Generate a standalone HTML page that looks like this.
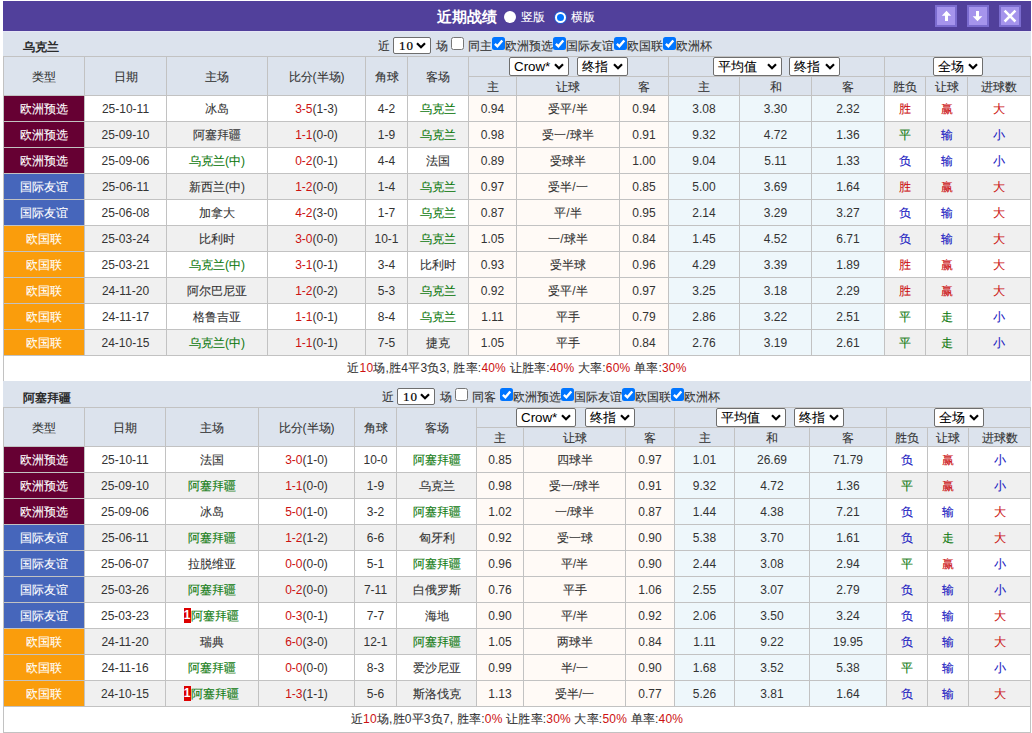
<!DOCTYPE html>
<html><head><meta charset="utf-8"><style>
html,body{margin:0;padding:0;background:#fff;width:1032px;height:733px;overflow:hidden;position:relative}
body{font-family:"Liberation Sans", sans-serif;font-size:12px;color:#333333}
div{position:absolute;box-sizing:content-box}
.c{text-align:center;white-space:nowrap;overflow:hidden}
.t{white-space:nowrap}
i.k{font-style:normal;-webkit-text-stroke:0.1px currentColor}
.nb i.k{-webkit-text-stroke:0}
.sel{background:#fff;border:1px solid #6e6e6e;border-radius:2px}
.sl{position:absolute;left:4px;top:0;font-size:13.33px;line-height:17px;color:#000}
.bd{display:inline-block;background:#dd0000;color:#fff;font-weight:bold;width:7px;height:15px;line-height:15px;vertical-align:middle;text-align:center;font-size:12px;margin-top:-2px}
</style></head><body>
<div style="left:3px;top:1px;width:1028px;height:30px;background:#51409b"></div>
<div class="t nb" style="left:437px;top:1px;height:30px;line-height:32px;font-size:15px;font-weight:bold;color:#fff"><i class="k">近期战绩</i></div>
<div style="left:504px;top:11px;width:12px;height:12px;border-radius:50%;background:#fff"></div>
<div class="t" style="left:521px;top:1px;height:30px;line-height:32px;color:#fff"><i class="k">竖版</i></div>
<div style="left:555px;top:12px;width:7px;height:7px;border-radius:50%;background:#0075ff;border:2px solid #fff;box-shadow:0 0 0 1px #1f5fd6"></div>
<div class="t" style="left:571px;top:1px;height:30px;line-height:32px;color:#fff"><i class="k">横版</i></div>
<div style="left:935px;top:5px;width:18px;height:18px;background:#a594ec;border:2px solid #7b6ccf"><svg width="22" height="22" viewBox="0 0 22 22" style="position:absolute;left:-2px;top:-2px"><path d="M11.5 5.8 L16.2 10.8 L13 10.8 L13 16 L10 16 L10 10.8 L6.8 10.8 Z" fill="#fff"/></svg></div>
<div style="left:967px;top:5px;width:18px;height:18px;background:#a594ec;border:2px solid #7b6ccf"><svg width="22" height="22" viewBox="0 0 22 22" style="position:absolute;left:-2px;top:-2px"><path d="M10.5 16.2 L15.3 11.2 L12 11.2 L12 6 L9 6 L9 11.2 L5.7 11.2 Z" fill="#fff"/></svg></div>
<div style="left:999px;top:5px;width:18px;height:18px;background:#a594ec;border:2px solid #7b6ccf"><svg width="22" height="22" viewBox="0 0 22 22" style="position:absolute;left:-2px;top:-2px"><path d="M5.6 5.7 L16.4 16.5 M16.4 5.7 L5.6 16.5" stroke="#fff" stroke-width="2.5" fill="none"/></svg></div>
<div style="left:3px;top:31px;width:1028px;height:25px;background:#dce3ed"></div>
<div style="left:3px;top:31px;width:1028px;height:1px;background:#e6e6f5"></div>
<div class="t nb" style="left:23px;top:34px;height:25px;line-height:27px;font-weight:bold;color:#2a2a2a"><i class="k">乌克兰</i></div>
<div class="t" style="left:378px;top:33px;height:25px;line-height:27px"><i class="k">近</i></div>
<div class="sel" style="left:393px;top:37px;width:36px;height:15px;border-radius:2px"><span class="sl" style="font-family:'Liberation Serif',serif;font-size:13px;line-height:16px;left:5px;letter-spacing:1px;-webkit-text-stroke:0.2px #000">10</span><svg width="10" height="7" viewBox="0 0 10 7" style="position:absolute;right:4px;top:4px"><path d="M1 1.2 L5 5.2 L9 1.2" fill="none" stroke="#000" stroke-width="2.2"/></svg></div>
<div class="t" style="left:436px;top:33px;height:25px;line-height:27px"><i class="k">场</i></div>
<div style="left:451px;top:37px;width:11px;height:11px;background:#fff;border:1px solid #767676;border-radius:2.5px"></div>
<div class="t" style="left:468px;top:33px;height:25px;line-height:27px"><i class="k">同主</i></div>
<div style="left:492px;top:37px;width:13px;height:13px;background:#0075ff;border-radius:2.5px"><svg width="13" height="13" viewBox="0 0 13 13" style="position:absolute;left:0;top:0"><path d="M2.9 6.9 L5.4 9.3 L10.3 3.4" fill="none" stroke="#fff" stroke-width="2.4" stroke-linecap="butt"/></svg></div>
<div class="t" style="left:505px;top:33px;height:25px;line-height:27px"><i class="k">欧洲预选</i></div>
<div style="left:553px;top:37px;width:13px;height:13px;background:#0075ff;border-radius:2.5px"><svg width="13" height="13" viewBox="0 0 13 13" style="position:absolute;left:0;top:0"><path d="M2.9 6.9 L5.4 9.3 L10.3 3.4" fill="none" stroke="#fff" stroke-width="2.4" stroke-linecap="butt"/></svg></div>
<div class="t" style="left:566px;top:33px;height:25px;line-height:27px"><i class="k">国际友谊</i></div>
<div style="left:614px;top:37px;width:13px;height:13px;background:#0075ff;border-radius:2.5px"><svg width="13" height="13" viewBox="0 0 13 13" style="position:absolute;left:0;top:0"><path d="M2.9 6.9 L5.4 9.3 L10.3 3.4" fill="none" stroke="#fff" stroke-width="2.4" stroke-linecap="butt"/></svg></div>
<div class="t" style="left:627px;top:33px;height:25px;line-height:27px"><i class="k">欧国联</i></div>
<div style="left:663px;top:37px;width:13px;height:13px;background:#0075ff;border-radius:2.5px"><svg width="13" height="13" viewBox="0 0 13 13" style="position:absolute;left:0;top:0"><path d="M2.9 6.9 L5.4 9.3 L10.3 3.4" fill="none" stroke="#fff" stroke-width="2.4" stroke-linecap="butt"/></svg></div>
<div class="t" style="left:676px;top:33px;height:25px;line-height:27px"><i class="k">欧洲杯</i></div>
<div style="left:4px;top:57px;width:1026px;height:38px;background:#dce3ed"></div>
<div style="left:4px;top:96px;width:1026px;height:25px;background:#ffffff"></div>
<div style="left:4px;top:96px;width:80px;height:25px;background:#660033"></div>
<div style="left:469px;top:96px;width:199px;height:25px;background:#fffaf6"></div>
<div style="left:669px;top:96px;width:215px;height:25px;background:#eef7fb"></div>
<div style="left:4px;top:122px;width:1026px;height:25px;background:#f0f0f0"></div>
<div style="left:4px;top:122px;width:80px;height:25px;background:#660033"></div>
<div style="left:469px;top:122px;width:199px;height:25px;background:#fffaf6"></div>
<div style="left:669px;top:122px;width:215px;height:25px;background:#eef7fb"></div>
<div style="left:4px;top:148px;width:1026px;height:25px;background:#ffffff"></div>
<div style="left:4px;top:148px;width:80px;height:25px;background:#660033"></div>
<div style="left:469px;top:148px;width:199px;height:25px;background:#fffaf6"></div>
<div style="left:669px;top:148px;width:215px;height:25px;background:#eef7fb"></div>
<div style="left:4px;top:174px;width:1026px;height:25px;background:#f0f0f0"></div>
<div style="left:4px;top:174px;width:80px;height:25px;background:#4666bb"></div>
<div style="left:469px;top:174px;width:199px;height:25px;background:#fffaf6"></div>
<div style="left:669px;top:174px;width:215px;height:25px;background:#eef7fb"></div>
<div style="left:4px;top:200px;width:1026px;height:25px;background:#ffffff"></div>
<div style="left:4px;top:200px;width:80px;height:25px;background:#4666bb"></div>
<div style="left:469px;top:200px;width:199px;height:25px;background:#fffaf6"></div>
<div style="left:669px;top:200px;width:215px;height:25px;background:#eef7fb"></div>
<div style="left:4px;top:226px;width:1026px;height:25px;background:#f0f0f0"></div>
<div style="left:4px;top:226px;width:80px;height:25px;background:#fa9d0c"></div>
<div style="left:469px;top:226px;width:199px;height:25px;background:#fffaf6"></div>
<div style="left:669px;top:226px;width:215px;height:25px;background:#eef7fb"></div>
<div style="left:4px;top:252px;width:1026px;height:25px;background:#ffffff"></div>
<div style="left:4px;top:252px;width:80px;height:25px;background:#fa9d0c"></div>
<div style="left:469px;top:252px;width:199px;height:25px;background:#fffaf6"></div>
<div style="left:669px;top:252px;width:215px;height:25px;background:#eef7fb"></div>
<div style="left:4px;top:278px;width:1026px;height:25px;background:#f0f0f0"></div>
<div style="left:4px;top:278px;width:80px;height:25px;background:#fa9d0c"></div>
<div style="left:469px;top:278px;width:199px;height:25px;background:#fffaf6"></div>
<div style="left:669px;top:278px;width:215px;height:25px;background:#eef7fb"></div>
<div style="left:4px;top:304px;width:1026px;height:25px;background:#ffffff"></div>
<div style="left:4px;top:304px;width:80px;height:25px;background:#fa9d0c"></div>
<div style="left:469px;top:304px;width:199px;height:25px;background:#fffaf6"></div>
<div style="left:669px;top:304px;width:215px;height:25px;background:#eef7fb"></div>
<div style="left:4px;top:330px;width:1026px;height:25px;background:#f0f0f0"></div>
<div style="left:4px;top:330px;width:80px;height:25px;background:#fa9d0c"></div>
<div style="left:469px;top:330px;width:199px;height:25px;background:#fffaf6"></div>
<div style="left:669px;top:330px;width:215px;height:25px;background:#eef7fb"></div>
<div style="left:3px;top:56px;width:1028px;height:1px;background:#c2c2c2"></div>
<div style="left:468px;top:76px;width:563px;height:1px;background:#c2c2c2"></div>
<div style="left:3px;top:95px;width:1028px;height:1px;background:#c2c2c2"></div>
<div style="left:3px;top:121px;width:1028px;height:1px;background:#c2c2c2"></div>
<div style="left:3px;top:147px;width:1028px;height:1px;background:#c2c2c2"></div>
<div style="left:3px;top:173px;width:1028px;height:1px;background:#c2c2c2"></div>
<div style="left:3px;top:199px;width:1028px;height:1px;background:#c2c2c2"></div>
<div style="left:3px;top:225px;width:1028px;height:1px;background:#c2c2c2"></div>
<div style="left:3px;top:251px;width:1028px;height:1px;background:#c2c2c2"></div>
<div style="left:3px;top:277px;width:1028px;height:1px;background:#c2c2c2"></div>
<div style="left:3px;top:303px;width:1028px;height:1px;background:#c2c2c2"></div>
<div style="left:3px;top:329px;width:1028px;height:1px;background:#c2c2c2"></div>
<div style="left:3px;top:355px;width:1028px;height:1px;background:#c2c2c2"></div>
<div style="left:3px;top:381px;width:1028px;height:1px;background:#c2c2c2"></div>
<div style="left:3px;top:56px;width:1px;height:326px;background:#c2c2c2"></div>
<div style="left:1030px;top:56px;width:1px;height:326px;background:#c2c2c2"></div>
<div style="left:84px;top:56px;width:1px;height:300px;background:#c2c2c2"></div>
<div style="left:166px;top:56px;width:1px;height:300px;background:#c2c2c2"></div>
<div style="left:267px;top:56px;width:1px;height:300px;background:#c2c2c2"></div>
<div style="left:365px;top:56px;width:1px;height:300px;background:#c2c2c2"></div>
<div style="left:407px;top:56px;width:1px;height:300px;background:#c2c2c2"></div>
<div style="left:468px;top:56px;width:1px;height:300px;background:#c2c2c2"></div>
<div style="left:516px;top:76px;width:1px;height:280px;background:#c2c2c2"></div>
<div style="left:619px;top:76px;width:1px;height:280px;background:#c2c2c2"></div>
<div style="left:668px;top:56px;width:1px;height:300px;background:#c2c2c2"></div>
<div style="left:739px;top:76px;width:1px;height:280px;background:#c2c2c2"></div>
<div style="left:811px;top:76px;width:1px;height:280px;background:#c2c2c2"></div>
<div style="left:884px;top:56px;width:1px;height:300px;background:#c2c2c2"></div>
<div style="left:925px;top:76px;width:1px;height:280px;background:#c2c2c2"></div>
<div style="left:967px;top:76px;width:1px;height:280px;background:#c2c2c2"></div>
<div class="c" style="left:4px;top:57px;width:80px;height:38px;line-height:38px;line-height:40px"><i class="k">类型</i></div>
<div class="c" style="left:85px;top:57px;width:81px;height:38px;line-height:38px;line-height:40px"><i class="k">日期</i></div>
<div class="c" style="left:167px;top:57px;width:100px;height:38px;line-height:38px;line-height:40px"><i class="k">主场</i></div>
<div class="c" style="left:268px;top:57px;width:97px;height:38px;line-height:38px;line-height:40px"><i class="k">比分</i>(<i class="k">半场</i>)</div>
<div class="c" style="left:366px;top:57px;width:41px;height:38px;line-height:38px;line-height:40px"><i class="k">角球</i></div>
<div class="c" style="left:408px;top:57px;width:60px;height:38px;line-height:38px;line-height:40px"><i class="k">客场</i></div>
<div class="c" style="left:469px;top:77px;width:47px;height:18px;line-height:18px;line-height:20px"><i class="k">主</i></div>
<div class="c" style="left:517px;top:77px;width:102px;height:18px;line-height:18px;line-height:20px"><i class="k">让球</i></div>
<div class="c" style="left:620px;top:77px;width:48px;height:18px;line-height:18px;line-height:20px"><i class="k">客</i></div>
<div class="c" style="left:669px;top:77px;width:70px;height:18px;line-height:18px;line-height:20px"><i class="k">主</i></div>
<div class="c" style="left:740px;top:77px;width:71px;height:18px;line-height:18px;line-height:20px"><i class="k">和</i></div>
<div class="c" style="left:812px;top:77px;width:72px;height:18px;line-height:18px;line-height:20px"><i class="k">客</i></div>
<div class="c" style="left:885px;top:77px;width:40px;height:18px;line-height:18px;line-height:20px"><i class="k">胜负</i></div>
<div class="c" style="left:926px;top:77px;width:41px;height:18px;line-height:18px;line-height:20px"><i class="k">让球</i></div>
<div class="c" style="left:968px;top:77px;width:62px;height:18px;line-height:18px;line-height:20px"><i class="k">进球数</i></div>
<div class="sel" style="left:509px;top:57px;width:58px;height:17px;"><span class="sl">Crow*</span><svg class="chev" width="10" height="7" viewBox="0 0 10 7" style="position:absolute;right:4px;top:5px"><path d="M1 1.2 L5 5.2 L9 1.2" fill="none" stroke="#000" stroke-width="2.2"/></svg></div>
<div class="sel" style="left:577px;top:57px;width:49px;height:17px;"><span class="sl"><i class="k">终指</i></span><svg class="chev" width="10" height="7" viewBox="0 0 10 7" style="position:absolute;right:4px;top:5px"><path d="M1 1.2 L5 5.2 L9 1.2" fill="none" stroke="#000" stroke-width="2.2"/></svg></div>
<div class="sel" style="left:713px;top:57px;width:67px;height:17px;"><span class="sl"><i class="k">平均值</i></span><svg class="chev" width="10" height="7" viewBox="0 0 10 7" style="position:absolute;right:4px;top:5px"><path d="M1 1.2 L5 5.2 L9 1.2" fill="none" stroke="#000" stroke-width="2.2"/></svg></div>
<div class="sel" style="left:789px;top:57px;width:49px;height:17px;"><span class="sl"><i class="k">终指</i></span><svg class="chev" width="10" height="7" viewBox="0 0 10 7" style="position:absolute;right:4px;top:5px"><path d="M1 1.2 L5 5.2 L9 1.2" fill="none" stroke="#000" stroke-width="2.2"/></svg></div>
<div class="sel" style="left:933px;top:57px;width:48px;height:17px;"><span class="sl"><i class="k">全场</i></span><svg class="chev" width="10" height="7" viewBox="0 0 10 7" style="position:absolute;right:4px;top:5px"><path d="M1 1.2 L5 5.2 L9 1.2" fill="none" stroke="#000" stroke-width="2.2"/></svg></div>
<div class="c" style="left:4px;top:97px;width:80px;height:25px;line-height:25px;color:#fff"><i class="k">欧洲预选</i></div>
<div class="c" style="left:85px;top:97px;width:81px;height:25px;line-height:25px;">25-10-11</div>
<div class="c" style="left:167px;top:97px;width:100px;height:25px;line-height:25px;"><i class="k">冰岛</i></div>
<div class="c" style="left:268px;top:97px;width:97px;height:25px;line-height:25px;"><span style="color:#cc1111">3-5</span>(1-3)</div>
<div class="c" style="left:366px;top:97px;width:41px;height:25px;line-height:25px;">4-2</div>
<div class="c" style="left:408px;top:97px;width:60px;height:25px;line-height:25px;"><span style="color:#0c780c"><i class="k">乌克兰</i></span></div>
<div class="c" style="left:469px;top:97px;width:47px;height:25px;line-height:25px;">0.94</div>
<div class="c" style="left:517px;top:97px;width:102px;height:25px;line-height:25px;"><i class="k">受平</i>/<i class="k">半</i></div>
<div class="c" style="left:620px;top:97px;width:48px;height:25px;line-height:25px;">0.94</div>
<div class="c" style="left:669px;top:97px;width:70px;height:25px;line-height:25px;">3.08</div>
<div class="c" style="left:740px;top:97px;width:71px;height:25px;line-height:25px;">3.30</div>
<div class="c" style="left:812px;top:97px;width:72px;height:25px;line-height:25px;">2.32</div>
<div class="c" style="left:885px;top:97px;width:40px;height:25px;line-height:25px;color:#cc1111"><i class="k">胜</i></div>
<div class="c" style="left:926px;top:97px;width:41px;height:25px;line-height:25px;color:#cc1111"><i class="k">赢</i></div>
<div class="c" style="left:968px;top:97px;width:62px;height:25px;line-height:25px;color:#cc1111"><i class="k">大</i></div>
<div class="c" style="left:4px;top:123px;width:80px;height:25px;line-height:25px;color:#fff"><i class="k">欧洲预选</i></div>
<div class="c" style="left:85px;top:123px;width:81px;height:25px;line-height:25px;">25-09-10</div>
<div class="c" style="left:167px;top:123px;width:100px;height:25px;line-height:25px;"><i class="k">阿塞拜疆</i></div>
<div class="c" style="left:268px;top:123px;width:97px;height:25px;line-height:25px;"><span style="color:#cc1111">1-1</span>(0-0)</div>
<div class="c" style="left:366px;top:123px;width:41px;height:25px;line-height:25px;">1-9</div>
<div class="c" style="left:408px;top:123px;width:60px;height:25px;line-height:25px;"><span style="color:#0c780c"><i class="k">乌克兰</i></span></div>
<div class="c" style="left:469px;top:123px;width:47px;height:25px;line-height:25px;">0.98</div>
<div class="c" style="left:517px;top:123px;width:102px;height:25px;line-height:25px;"><i class="k">受一</i>/<i class="k">球半</i></div>
<div class="c" style="left:620px;top:123px;width:48px;height:25px;line-height:25px;">0.91</div>
<div class="c" style="left:669px;top:123px;width:70px;height:25px;line-height:25px;">9.32</div>
<div class="c" style="left:740px;top:123px;width:71px;height:25px;line-height:25px;">4.72</div>
<div class="c" style="left:812px;top:123px;width:72px;height:25px;line-height:25px;">1.36</div>
<div class="c" style="left:885px;top:123px;width:40px;height:25px;line-height:25px;color:#0c780c"><i class="k">平</i></div>
<div class="c" style="left:926px;top:123px;width:41px;height:25px;line-height:25px;color:#1515c0"><i class="k">输</i></div>
<div class="c" style="left:968px;top:123px;width:62px;height:25px;line-height:25px;color:#1515c0"><i class="k">小</i></div>
<div class="c" style="left:4px;top:149px;width:80px;height:25px;line-height:25px;color:#fff"><i class="k">欧洲预选</i></div>
<div class="c" style="left:85px;top:149px;width:81px;height:25px;line-height:25px;">25-09-06</div>
<div class="c" style="left:167px;top:149px;width:100px;height:25px;line-height:25px;"><span style="color:#0c780c"><i class="k">乌克兰</i>(<i class="k">中</i>)</span></div>
<div class="c" style="left:268px;top:149px;width:97px;height:25px;line-height:25px;"><span style="color:#cc1111">0-2</span>(0-1)</div>
<div class="c" style="left:366px;top:149px;width:41px;height:25px;line-height:25px;">4-4</div>
<div class="c" style="left:408px;top:149px;width:60px;height:25px;line-height:25px;"><i class="k">法国</i></div>
<div class="c" style="left:469px;top:149px;width:47px;height:25px;line-height:25px;">0.89</div>
<div class="c" style="left:517px;top:149px;width:102px;height:25px;line-height:25px;"><i class="k">受球半</i></div>
<div class="c" style="left:620px;top:149px;width:48px;height:25px;line-height:25px;">1.00</div>
<div class="c" style="left:669px;top:149px;width:70px;height:25px;line-height:25px;">9.04</div>
<div class="c" style="left:740px;top:149px;width:71px;height:25px;line-height:25px;">5.11</div>
<div class="c" style="left:812px;top:149px;width:72px;height:25px;line-height:25px;">1.33</div>
<div class="c" style="left:885px;top:149px;width:40px;height:25px;line-height:25px;color:#1515c0"><i class="k">负</i></div>
<div class="c" style="left:926px;top:149px;width:41px;height:25px;line-height:25px;color:#1515c0"><i class="k">输</i></div>
<div class="c" style="left:968px;top:149px;width:62px;height:25px;line-height:25px;color:#1515c0"><i class="k">小</i></div>
<div class="c" style="left:4px;top:175px;width:80px;height:25px;line-height:25px;color:#fff"><i class="k">国际友谊</i></div>
<div class="c" style="left:85px;top:175px;width:81px;height:25px;line-height:25px;">25-06-11</div>
<div class="c" style="left:167px;top:175px;width:100px;height:25px;line-height:25px;"><i class="k">新西兰</i>(<i class="k">中</i>)</div>
<div class="c" style="left:268px;top:175px;width:97px;height:25px;line-height:25px;"><span style="color:#cc1111">1-2</span>(0-0)</div>
<div class="c" style="left:366px;top:175px;width:41px;height:25px;line-height:25px;">1-4</div>
<div class="c" style="left:408px;top:175px;width:60px;height:25px;line-height:25px;"><span style="color:#0c780c"><i class="k">乌克兰</i></span></div>
<div class="c" style="left:469px;top:175px;width:47px;height:25px;line-height:25px;">0.97</div>
<div class="c" style="left:517px;top:175px;width:102px;height:25px;line-height:25px;"><i class="k">受半</i>/<i class="k">一</i></div>
<div class="c" style="left:620px;top:175px;width:48px;height:25px;line-height:25px;">0.85</div>
<div class="c" style="left:669px;top:175px;width:70px;height:25px;line-height:25px;">5.00</div>
<div class="c" style="left:740px;top:175px;width:71px;height:25px;line-height:25px;">3.69</div>
<div class="c" style="left:812px;top:175px;width:72px;height:25px;line-height:25px;">1.64</div>
<div class="c" style="left:885px;top:175px;width:40px;height:25px;line-height:25px;color:#cc1111"><i class="k">胜</i></div>
<div class="c" style="left:926px;top:175px;width:41px;height:25px;line-height:25px;color:#cc1111"><i class="k">赢</i></div>
<div class="c" style="left:968px;top:175px;width:62px;height:25px;line-height:25px;color:#cc1111"><i class="k">大</i></div>
<div class="c" style="left:4px;top:201px;width:80px;height:25px;line-height:25px;color:#fff"><i class="k">国际友谊</i></div>
<div class="c" style="left:85px;top:201px;width:81px;height:25px;line-height:25px;">25-06-08</div>
<div class="c" style="left:167px;top:201px;width:100px;height:25px;line-height:25px;"><i class="k">加拿大</i></div>
<div class="c" style="left:268px;top:201px;width:97px;height:25px;line-height:25px;"><span style="color:#cc1111">4-2</span>(3-0)</div>
<div class="c" style="left:366px;top:201px;width:41px;height:25px;line-height:25px;">1-7</div>
<div class="c" style="left:408px;top:201px;width:60px;height:25px;line-height:25px;"><span style="color:#0c780c"><i class="k">乌克兰</i></span></div>
<div class="c" style="left:469px;top:201px;width:47px;height:25px;line-height:25px;">0.87</div>
<div class="c" style="left:517px;top:201px;width:102px;height:25px;line-height:25px;"><i class="k">平</i>/<i class="k">半</i></div>
<div class="c" style="left:620px;top:201px;width:48px;height:25px;line-height:25px;">0.95</div>
<div class="c" style="left:669px;top:201px;width:70px;height:25px;line-height:25px;">2.14</div>
<div class="c" style="left:740px;top:201px;width:71px;height:25px;line-height:25px;">3.29</div>
<div class="c" style="left:812px;top:201px;width:72px;height:25px;line-height:25px;">3.27</div>
<div class="c" style="left:885px;top:201px;width:40px;height:25px;line-height:25px;color:#1515c0"><i class="k">负</i></div>
<div class="c" style="left:926px;top:201px;width:41px;height:25px;line-height:25px;color:#1515c0"><i class="k">输</i></div>
<div class="c" style="left:968px;top:201px;width:62px;height:25px;line-height:25px;color:#cc1111"><i class="k">大</i></div>
<div class="c" style="left:4px;top:227px;width:80px;height:25px;line-height:25px;color:#fff"><i class="k">欧国联</i></div>
<div class="c" style="left:85px;top:227px;width:81px;height:25px;line-height:25px;">25-03-24</div>
<div class="c" style="left:167px;top:227px;width:100px;height:25px;line-height:25px;"><i class="k">比利时</i></div>
<div class="c" style="left:268px;top:227px;width:97px;height:25px;line-height:25px;"><span style="color:#cc1111">3-0</span>(0-0)</div>
<div class="c" style="left:366px;top:227px;width:41px;height:25px;line-height:25px;">10-1</div>
<div class="c" style="left:408px;top:227px;width:60px;height:25px;line-height:25px;"><span style="color:#0c780c"><i class="k">乌克兰</i></span></div>
<div class="c" style="left:469px;top:227px;width:47px;height:25px;line-height:25px;">1.05</div>
<div class="c" style="left:517px;top:227px;width:102px;height:25px;line-height:25px;"><i class="k">一</i>/<i class="k">球半</i></div>
<div class="c" style="left:620px;top:227px;width:48px;height:25px;line-height:25px;">0.84</div>
<div class="c" style="left:669px;top:227px;width:70px;height:25px;line-height:25px;">1.45</div>
<div class="c" style="left:740px;top:227px;width:71px;height:25px;line-height:25px;">4.52</div>
<div class="c" style="left:812px;top:227px;width:72px;height:25px;line-height:25px;">6.71</div>
<div class="c" style="left:885px;top:227px;width:40px;height:25px;line-height:25px;color:#1515c0"><i class="k">负</i></div>
<div class="c" style="left:926px;top:227px;width:41px;height:25px;line-height:25px;color:#1515c0"><i class="k">输</i></div>
<div class="c" style="left:968px;top:227px;width:62px;height:25px;line-height:25px;color:#cc1111"><i class="k">大</i></div>
<div class="c" style="left:4px;top:253px;width:80px;height:25px;line-height:25px;color:#fff"><i class="k">欧国联</i></div>
<div class="c" style="left:85px;top:253px;width:81px;height:25px;line-height:25px;">25-03-21</div>
<div class="c" style="left:167px;top:253px;width:100px;height:25px;line-height:25px;"><span style="color:#0c780c"><i class="k">乌克兰</i>(<i class="k">中</i>)</span></div>
<div class="c" style="left:268px;top:253px;width:97px;height:25px;line-height:25px;"><span style="color:#cc1111">3-1</span>(0-1)</div>
<div class="c" style="left:366px;top:253px;width:41px;height:25px;line-height:25px;">3-4</div>
<div class="c" style="left:408px;top:253px;width:60px;height:25px;line-height:25px;"><i class="k">比利时</i></div>
<div class="c" style="left:469px;top:253px;width:47px;height:25px;line-height:25px;">0.93</div>
<div class="c" style="left:517px;top:253px;width:102px;height:25px;line-height:25px;"><i class="k">受半球</i></div>
<div class="c" style="left:620px;top:253px;width:48px;height:25px;line-height:25px;">0.96</div>
<div class="c" style="left:669px;top:253px;width:70px;height:25px;line-height:25px;">4.29</div>
<div class="c" style="left:740px;top:253px;width:71px;height:25px;line-height:25px;">3.39</div>
<div class="c" style="left:812px;top:253px;width:72px;height:25px;line-height:25px;">1.89</div>
<div class="c" style="left:885px;top:253px;width:40px;height:25px;line-height:25px;color:#cc1111"><i class="k">胜</i></div>
<div class="c" style="left:926px;top:253px;width:41px;height:25px;line-height:25px;color:#cc1111"><i class="k">赢</i></div>
<div class="c" style="left:968px;top:253px;width:62px;height:25px;line-height:25px;color:#cc1111"><i class="k">大</i></div>
<div class="c" style="left:4px;top:279px;width:80px;height:25px;line-height:25px;color:#fff"><i class="k">欧国联</i></div>
<div class="c" style="left:85px;top:279px;width:81px;height:25px;line-height:25px;">24-11-20</div>
<div class="c" style="left:167px;top:279px;width:100px;height:25px;line-height:25px;"><i class="k">阿尔巴尼亚</i></div>
<div class="c" style="left:268px;top:279px;width:97px;height:25px;line-height:25px;"><span style="color:#cc1111">1-2</span>(0-2)</div>
<div class="c" style="left:366px;top:279px;width:41px;height:25px;line-height:25px;">5-3</div>
<div class="c" style="left:408px;top:279px;width:60px;height:25px;line-height:25px;"><span style="color:#0c780c"><i class="k">乌克兰</i></span></div>
<div class="c" style="left:469px;top:279px;width:47px;height:25px;line-height:25px;">0.92</div>
<div class="c" style="left:517px;top:279px;width:102px;height:25px;line-height:25px;"><i class="k">受平</i>/<i class="k">半</i></div>
<div class="c" style="left:620px;top:279px;width:48px;height:25px;line-height:25px;">0.97</div>
<div class="c" style="left:669px;top:279px;width:70px;height:25px;line-height:25px;">3.25</div>
<div class="c" style="left:740px;top:279px;width:71px;height:25px;line-height:25px;">3.18</div>
<div class="c" style="left:812px;top:279px;width:72px;height:25px;line-height:25px;">2.29</div>
<div class="c" style="left:885px;top:279px;width:40px;height:25px;line-height:25px;color:#cc1111"><i class="k">胜</i></div>
<div class="c" style="left:926px;top:279px;width:41px;height:25px;line-height:25px;color:#cc1111"><i class="k">赢</i></div>
<div class="c" style="left:968px;top:279px;width:62px;height:25px;line-height:25px;color:#cc1111"><i class="k">大</i></div>
<div class="c" style="left:4px;top:305px;width:80px;height:25px;line-height:25px;color:#fff"><i class="k">欧国联</i></div>
<div class="c" style="left:85px;top:305px;width:81px;height:25px;line-height:25px;">24-11-17</div>
<div class="c" style="left:167px;top:305px;width:100px;height:25px;line-height:25px;"><i class="k">格鲁吉亚</i></div>
<div class="c" style="left:268px;top:305px;width:97px;height:25px;line-height:25px;"><span style="color:#cc1111">1-1</span>(0-1)</div>
<div class="c" style="left:366px;top:305px;width:41px;height:25px;line-height:25px;">8-4</div>
<div class="c" style="left:408px;top:305px;width:60px;height:25px;line-height:25px;"><span style="color:#0c780c"><i class="k">乌克兰</i></span></div>
<div class="c" style="left:469px;top:305px;width:47px;height:25px;line-height:25px;">1.11</div>
<div class="c" style="left:517px;top:305px;width:102px;height:25px;line-height:25px;"><i class="k">平手</i></div>
<div class="c" style="left:620px;top:305px;width:48px;height:25px;line-height:25px;">0.79</div>
<div class="c" style="left:669px;top:305px;width:70px;height:25px;line-height:25px;">2.86</div>
<div class="c" style="left:740px;top:305px;width:71px;height:25px;line-height:25px;">3.22</div>
<div class="c" style="left:812px;top:305px;width:72px;height:25px;line-height:25px;">2.51</div>
<div class="c" style="left:885px;top:305px;width:40px;height:25px;line-height:25px;color:#0c780c"><i class="k">平</i></div>
<div class="c" style="left:926px;top:305px;width:41px;height:25px;line-height:25px;color:#0c780c"><i class="k">走</i></div>
<div class="c" style="left:968px;top:305px;width:62px;height:25px;line-height:25px;color:#1515c0"><i class="k">小</i></div>
<div class="c" style="left:4px;top:331px;width:80px;height:25px;line-height:25px;color:#fff"><i class="k">欧国联</i></div>
<div class="c" style="left:85px;top:331px;width:81px;height:25px;line-height:25px;">24-10-15</div>
<div class="c" style="left:167px;top:331px;width:100px;height:25px;line-height:25px;"><span style="color:#0c780c"><i class="k">乌克兰</i>(<i class="k">中</i>)</span></div>
<div class="c" style="left:268px;top:331px;width:97px;height:25px;line-height:25px;"><span style="color:#cc1111">1-1</span>(0-1)</div>
<div class="c" style="left:366px;top:331px;width:41px;height:25px;line-height:25px;">7-5</div>
<div class="c" style="left:408px;top:331px;width:60px;height:25px;line-height:25px;"><i class="k">捷克</i></div>
<div class="c" style="left:469px;top:331px;width:47px;height:25px;line-height:25px;">1.05</div>
<div class="c" style="left:517px;top:331px;width:102px;height:25px;line-height:25px;"><i class="k">平手</i></div>
<div class="c" style="left:620px;top:331px;width:48px;height:25px;line-height:25px;">0.84</div>
<div class="c" style="left:669px;top:331px;width:70px;height:25px;line-height:25px;">2.76</div>
<div class="c" style="left:740px;top:331px;width:71px;height:25px;line-height:25px;">3.19</div>
<div class="c" style="left:812px;top:331px;width:72px;height:25px;line-height:25px;">2.61</div>
<div class="c" style="left:885px;top:331px;width:40px;height:25px;line-height:25px;color:#0c780c"><i class="k">平</i></div>
<div class="c" style="left:926px;top:331px;width:41px;height:25px;line-height:25px;color:#0c780c"><i class="k">走</i></div>
<div class="c" style="left:968px;top:331px;width:62px;height:25px;line-height:25px;color:#1515c0"><i class="k">小</i></div>
<div class="c" style="left:4px;top:356px;width:1026px;height:25px;line-height:25px;letter-spacing:0.2px"><i class="k">近</i><span style="color:#cc1111">10</span><i class="k">场</i>,<i class="k">胜</i>4<i class="k">平</i>3<i class="k">负</i>3, <i class="k">胜率</i>:<span style="color:#cc1111">40%</span> <i class="k">让胜率</i>:<span style="color:#cc1111">40%</span> <i class="k">大率</i>:<span style="color:#cc1111">60%</span> <i class="k">单率</i>:<span style="color:#cc1111">30%</span></div>
<div style="left:3px;top:381px;width:1028px;height:26px;background:#dce3ed"></div>
<div class="t nb" style="left:23px;top:385px;height:25px;line-height:27px;font-weight:bold;color:#2a2a2a"><i class="k">阿塞拜疆</i></div>
<div class="t" style="left:382px;top:384px;height:25px;line-height:27px"><i class="k">近</i></div>
<div class="sel" style="left:397px;top:388px;width:36px;height:15px;border-radius:2px"><span class="sl" style="font-family:'Liberation Serif',serif;font-size:13px;line-height:16px;left:5px;letter-spacing:1px;-webkit-text-stroke:0.2px #000">10</span><svg width="10" height="7" viewBox="0 0 10 7" style="position:absolute;right:4px;top:4px"><path d="M1 1.2 L5 5.2 L9 1.2" fill="none" stroke="#000" stroke-width="2.2"/></svg></div>
<div class="t" style="left:440px;top:384px;height:25px;line-height:27px"><i class="k">场</i></div>
<div style="left:455px;top:388px;width:11px;height:11px;background:#fff;border:1px solid #767676;border-radius:2.5px"></div>
<div class="t" style="left:472px;top:384px;height:25px;line-height:27px"><i class="k">同客</i></div>
<div style="left:500px;top:388px;width:13px;height:13px;background:#0075ff;border-radius:2.5px"><svg width="13" height="13" viewBox="0 0 13 13" style="position:absolute;left:0;top:0"><path d="M2.9 6.9 L5.4 9.3 L10.3 3.4" fill="none" stroke="#fff" stroke-width="2.4" stroke-linecap="butt"/></svg></div>
<div class="t" style="left:513px;top:384px;height:25px;line-height:27px"><i class="k">欧洲预选</i></div>
<div style="left:561px;top:388px;width:13px;height:13px;background:#0075ff;border-radius:2.5px"><svg width="13" height="13" viewBox="0 0 13 13" style="position:absolute;left:0;top:0"><path d="M2.9 6.9 L5.4 9.3 L10.3 3.4" fill="none" stroke="#fff" stroke-width="2.4" stroke-linecap="butt"/></svg></div>
<div class="t" style="left:574px;top:384px;height:25px;line-height:27px"><i class="k">国际友谊</i></div>
<div style="left:622px;top:388px;width:13px;height:13px;background:#0075ff;border-radius:2.5px"><svg width="13" height="13" viewBox="0 0 13 13" style="position:absolute;left:0;top:0"><path d="M2.9 6.9 L5.4 9.3 L10.3 3.4" fill="none" stroke="#fff" stroke-width="2.4" stroke-linecap="butt"/></svg></div>
<div class="t" style="left:635px;top:384px;height:25px;line-height:27px"><i class="k">欧国联</i></div>
<div style="left:671px;top:388px;width:13px;height:13px;background:#0075ff;border-radius:2.5px"><svg width="13" height="13" viewBox="0 0 13 13" style="position:absolute;left:0;top:0"><path d="M2.9 6.9 L5.4 9.3 L10.3 3.4" fill="none" stroke="#fff" stroke-width="2.4" stroke-linecap="butt"/></svg></div>
<div class="t" style="left:684px;top:384px;height:25px;line-height:27px"><i class="k">欧洲杯</i></div>
<div style="left:4px;top:408px;width:1026px;height:38px;background:#dce3ed"></div>
<div style="left:4px;top:447px;width:1026px;height:25px;background:#ffffff"></div>
<div style="left:4px;top:447px;width:80px;height:25px;background:#660033"></div>
<div style="left:477px;top:447px;width:197px;height:25px;background:#fffaf6"></div>
<div style="left:675px;top:447px;width:211px;height:25px;background:#eef7fb"></div>
<div style="left:4px;top:473px;width:1026px;height:25px;background:#f0f0f0"></div>
<div style="left:4px;top:473px;width:80px;height:25px;background:#660033"></div>
<div style="left:477px;top:473px;width:197px;height:25px;background:#fffaf6"></div>
<div style="left:675px;top:473px;width:211px;height:25px;background:#eef7fb"></div>
<div style="left:4px;top:499px;width:1026px;height:25px;background:#ffffff"></div>
<div style="left:4px;top:499px;width:80px;height:25px;background:#660033"></div>
<div style="left:477px;top:499px;width:197px;height:25px;background:#fffaf6"></div>
<div style="left:675px;top:499px;width:211px;height:25px;background:#eef7fb"></div>
<div style="left:4px;top:525px;width:1026px;height:25px;background:#f0f0f0"></div>
<div style="left:4px;top:525px;width:80px;height:25px;background:#4666bb"></div>
<div style="left:477px;top:525px;width:197px;height:25px;background:#fffaf6"></div>
<div style="left:675px;top:525px;width:211px;height:25px;background:#eef7fb"></div>
<div style="left:4px;top:551px;width:1026px;height:25px;background:#ffffff"></div>
<div style="left:4px;top:551px;width:80px;height:25px;background:#4666bb"></div>
<div style="left:477px;top:551px;width:197px;height:25px;background:#fffaf6"></div>
<div style="left:675px;top:551px;width:211px;height:25px;background:#eef7fb"></div>
<div style="left:4px;top:577px;width:1026px;height:25px;background:#f0f0f0"></div>
<div style="left:4px;top:577px;width:80px;height:25px;background:#4666bb"></div>
<div style="left:477px;top:577px;width:197px;height:25px;background:#fffaf6"></div>
<div style="left:675px;top:577px;width:211px;height:25px;background:#eef7fb"></div>
<div style="left:4px;top:603px;width:1026px;height:25px;background:#ffffff"></div>
<div style="left:4px;top:603px;width:80px;height:25px;background:#4666bb"></div>
<div style="left:477px;top:603px;width:197px;height:25px;background:#fffaf6"></div>
<div style="left:675px;top:603px;width:211px;height:25px;background:#eef7fb"></div>
<div style="left:4px;top:629px;width:1026px;height:25px;background:#f0f0f0"></div>
<div style="left:4px;top:629px;width:80px;height:25px;background:#fa9d0c"></div>
<div style="left:477px;top:629px;width:197px;height:25px;background:#fffaf6"></div>
<div style="left:675px;top:629px;width:211px;height:25px;background:#eef7fb"></div>
<div style="left:4px;top:655px;width:1026px;height:25px;background:#ffffff"></div>
<div style="left:4px;top:655px;width:80px;height:25px;background:#fa9d0c"></div>
<div style="left:477px;top:655px;width:197px;height:25px;background:#fffaf6"></div>
<div style="left:675px;top:655px;width:211px;height:25px;background:#eef7fb"></div>
<div style="left:4px;top:681px;width:1026px;height:25px;background:#f0f0f0"></div>
<div style="left:4px;top:681px;width:80px;height:25px;background:#fa9d0c"></div>
<div style="left:477px;top:681px;width:197px;height:25px;background:#fffaf6"></div>
<div style="left:675px;top:681px;width:211px;height:25px;background:#eef7fb"></div>
<div style="left:3px;top:407px;width:1028px;height:1px;background:#c2c2c2"></div>
<div style="left:476px;top:427px;width:555px;height:1px;background:#c2c2c2"></div>
<div style="left:3px;top:446px;width:1028px;height:1px;background:#c2c2c2"></div>
<div style="left:3px;top:472px;width:1028px;height:1px;background:#c2c2c2"></div>
<div style="left:3px;top:498px;width:1028px;height:1px;background:#c2c2c2"></div>
<div style="left:3px;top:524px;width:1028px;height:1px;background:#c2c2c2"></div>
<div style="left:3px;top:550px;width:1028px;height:1px;background:#c2c2c2"></div>
<div style="left:3px;top:576px;width:1028px;height:1px;background:#c2c2c2"></div>
<div style="left:3px;top:602px;width:1028px;height:1px;background:#c2c2c2"></div>
<div style="left:3px;top:628px;width:1028px;height:1px;background:#c2c2c2"></div>
<div style="left:3px;top:654px;width:1028px;height:1px;background:#c2c2c2"></div>
<div style="left:3px;top:680px;width:1028px;height:1px;background:#c2c2c2"></div>
<div style="left:3px;top:706px;width:1028px;height:1px;background:#c2c2c2"></div>
<div style="left:3px;top:732px;width:1028px;height:1px;background:#c2c2c2"></div>
<div style="left:3px;top:407px;width:1px;height:326px;background:#c2c2c2"></div>
<div style="left:1030px;top:407px;width:1px;height:326px;background:#c2c2c2"></div>
<div style="left:84px;top:407px;width:1px;height:300px;background:#c2c2c2"></div>
<div style="left:165px;top:407px;width:1px;height:300px;background:#c2c2c2"></div>
<div style="left:258px;top:407px;width:1px;height:300px;background:#c2c2c2"></div>
<div style="left:354px;top:407px;width:1px;height:300px;background:#c2c2c2"></div>
<div style="left:396px;top:407px;width:1px;height:300px;background:#c2c2c2"></div>
<div style="left:476px;top:407px;width:1px;height:300px;background:#c2c2c2"></div>
<div style="left:523px;top:427px;width:1px;height:280px;background:#c2c2c2"></div>
<div style="left:625px;top:427px;width:1px;height:280px;background:#c2c2c2"></div>
<div style="left:674px;top:407px;width:1px;height:300px;background:#c2c2c2"></div>
<div style="left:734px;top:427px;width:1px;height:280px;background:#c2c2c2"></div>
<div style="left:809px;top:427px;width:1px;height:280px;background:#c2c2c2"></div>
<div style="left:886px;top:407px;width:1px;height:300px;background:#c2c2c2"></div>
<div style="left:927px;top:427px;width:1px;height:280px;background:#c2c2c2"></div>
<div style="left:968px;top:427px;width:1px;height:280px;background:#c2c2c2"></div>
<div class="c" style="left:4px;top:408px;width:80px;height:38px;line-height:38px;line-height:40px"><i class="k">类型</i></div>
<div class="c" style="left:85px;top:408px;width:80px;height:38px;line-height:38px;line-height:40px"><i class="k">日期</i></div>
<div class="c" style="left:166px;top:408px;width:92px;height:38px;line-height:38px;line-height:40px"><i class="k">主场</i></div>
<div class="c" style="left:259px;top:408px;width:95px;height:38px;line-height:38px;line-height:40px"><i class="k">比分</i>(<i class="k">半场</i>)</div>
<div class="c" style="left:355px;top:408px;width:41px;height:38px;line-height:38px;line-height:40px"><i class="k">角球</i></div>
<div class="c" style="left:397px;top:408px;width:79px;height:38px;line-height:38px;line-height:40px"><i class="k">客场</i></div>
<div class="c" style="left:477px;top:428px;width:46px;height:18px;line-height:18px;line-height:20px"><i class="k">主</i></div>
<div class="c" style="left:524px;top:428px;width:101px;height:18px;line-height:18px;line-height:20px"><i class="k">让球</i></div>
<div class="c" style="left:626px;top:428px;width:48px;height:18px;line-height:18px;line-height:20px"><i class="k">客</i></div>
<div class="c" style="left:675px;top:428px;width:59px;height:18px;line-height:18px;line-height:20px"><i class="k">主</i></div>
<div class="c" style="left:735px;top:428px;width:74px;height:18px;line-height:18px;line-height:20px"><i class="k">和</i></div>
<div class="c" style="left:810px;top:428px;width:76px;height:18px;line-height:18px;line-height:20px"><i class="k">客</i></div>
<div class="c" style="left:887px;top:428px;width:40px;height:18px;line-height:18px;line-height:20px"><i class="k">胜负</i></div>
<div class="c" style="left:928px;top:428px;width:40px;height:18px;line-height:18px;line-height:20px"><i class="k">让球</i></div>
<div class="c" style="left:969px;top:428px;width:61px;height:18px;line-height:18px;line-height:20px"><i class="k">进球数</i></div>
<div class="sel" style="left:516px;top:408px;width:58px;height:17px;"><span class="sl">Crow*</span><svg class="chev" width="10" height="7" viewBox="0 0 10 7" style="position:absolute;right:4px;top:5px"><path d="M1 1.2 L5 5.2 L9 1.2" fill="none" stroke="#000" stroke-width="2.2"/></svg></div>
<div class="sel" style="left:585px;top:408px;width:48px;height:17px;"><span class="sl"><i class="k">终指</i></span><svg class="chev" width="10" height="7" viewBox="0 0 10 7" style="position:absolute;right:4px;top:5px"><path d="M1 1.2 L5 5.2 L9 1.2" fill="none" stroke="#000" stroke-width="2.2"/></svg></div>
<div class="sel" style="left:716px;top:408px;width:68px;height:17px;"><span class="sl"><i class="k">平均值</i></span><svg class="chev" width="10" height="7" viewBox="0 0 10 7" style="position:absolute;right:4px;top:5px"><path d="M1 1.2 L5 5.2 L9 1.2" fill="none" stroke="#000" stroke-width="2.2"/></svg></div>
<div class="sel" style="left:794px;top:408px;width:48px;height:17px;"><span class="sl"><i class="k">终指</i></span><svg class="chev" width="10" height="7" viewBox="0 0 10 7" style="position:absolute;right:4px;top:5px"><path d="M1 1.2 L5 5.2 L9 1.2" fill="none" stroke="#000" stroke-width="2.2"/></svg></div>
<div class="sel" style="left:934px;top:408px;width:48px;height:17px;"><span class="sl"><i class="k">全场</i></span><svg class="chev" width="10" height="7" viewBox="0 0 10 7" style="position:absolute;right:4px;top:5px"><path d="M1 1.2 L5 5.2 L9 1.2" fill="none" stroke="#000" stroke-width="2.2"/></svg></div>
<div class="c" style="left:4px;top:448px;width:80px;height:25px;line-height:25px;color:#fff"><i class="k">欧洲预选</i></div>
<div class="c" style="left:85px;top:448px;width:80px;height:25px;line-height:25px;">25-10-11</div>
<div class="c" style="left:166px;top:448px;width:92px;height:25px;line-height:25px;"><i class="k">法国</i></div>
<div class="c" style="left:259px;top:448px;width:95px;height:25px;line-height:25px;"><span style="color:#cc1111">3-0</span>(1-0)</div>
<div class="c" style="left:355px;top:448px;width:41px;height:25px;line-height:25px;">10-0</div>
<div class="c" style="left:397px;top:448px;width:79px;height:25px;line-height:25px;"><span style="color:#0c780c"><i class="k">阿塞拜疆</i></span></div>
<div class="c" style="left:477px;top:448px;width:46px;height:25px;line-height:25px;">0.85</div>
<div class="c" style="left:524px;top:448px;width:101px;height:25px;line-height:25px;"><i class="k">四球半</i></div>
<div class="c" style="left:626px;top:448px;width:48px;height:25px;line-height:25px;">0.97</div>
<div class="c" style="left:675px;top:448px;width:59px;height:25px;line-height:25px;">1.01</div>
<div class="c" style="left:735px;top:448px;width:74px;height:25px;line-height:25px;">26.69</div>
<div class="c" style="left:810px;top:448px;width:76px;height:25px;line-height:25px;">71.79</div>
<div class="c" style="left:887px;top:448px;width:40px;height:25px;line-height:25px;color:#1515c0"><i class="k">负</i></div>
<div class="c" style="left:928px;top:448px;width:40px;height:25px;line-height:25px;color:#cc1111"><i class="k">赢</i></div>
<div class="c" style="left:969px;top:448px;width:61px;height:25px;line-height:25px;color:#1515c0"><i class="k">小</i></div>
<div class="c" style="left:4px;top:474px;width:80px;height:25px;line-height:25px;color:#fff"><i class="k">欧洲预选</i></div>
<div class="c" style="left:85px;top:474px;width:80px;height:25px;line-height:25px;">25-09-10</div>
<div class="c" style="left:166px;top:474px;width:92px;height:25px;line-height:25px;"><span style="color:#0c780c"><i class="k">阿塞拜疆</i></span></div>
<div class="c" style="left:259px;top:474px;width:95px;height:25px;line-height:25px;"><span style="color:#cc1111">1-1</span>(0-0)</div>
<div class="c" style="left:355px;top:474px;width:41px;height:25px;line-height:25px;">1-9</div>
<div class="c" style="left:397px;top:474px;width:79px;height:25px;line-height:25px;"><i class="k">乌克兰</i></div>
<div class="c" style="left:477px;top:474px;width:46px;height:25px;line-height:25px;">0.98</div>
<div class="c" style="left:524px;top:474px;width:101px;height:25px;line-height:25px;"><i class="k">受一</i>/<i class="k">球半</i></div>
<div class="c" style="left:626px;top:474px;width:48px;height:25px;line-height:25px;">0.91</div>
<div class="c" style="left:675px;top:474px;width:59px;height:25px;line-height:25px;">9.32</div>
<div class="c" style="left:735px;top:474px;width:74px;height:25px;line-height:25px;">4.72</div>
<div class="c" style="left:810px;top:474px;width:76px;height:25px;line-height:25px;">1.36</div>
<div class="c" style="left:887px;top:474px;width:40px;height:25px;line-height:25px;color:#0c780c"><i class="k">平</i></div>
<div class="c" style="left:928px;top:474px;width:40px;height:25px;line-height:25px;color:#cc1111"><i class="k">赢</i></div>
<div class="c" style="left:969px;top:474px;width:61px;height:25px;line-height:25px;color:#1515c0"><i class="k">小</i></div>
<div class="c" style="left:4px;top:500px;width:80px;height:25px;line-height:25px;color:#fff"><i class="k">欧洲预选</i></div>
<div class="c" style="left:85px;top:500px;width:80px;height:25px;line-height:25px;">25-09-06</div>
<div class="c" style="left:166px;top:500px;width:92px;height:25px;line-height:25px;"><i class="k">冰岛</i></div>
<div class="c" style="left:259px;top:500px;width:95px;height:25px;line-height:25px;"><span style="color:#cc1111">5-0</span>(1-0)</div>
<div class="c" style="left:355px;top:500px;width:41px;height:25px;line-height:25px;">3-2</div>
<div class="c" style="left:397px;top:500px;width:79px;height:25px;line-height:25px;"><span style="color:#0c780c"><i class="k">阿塞拜疆</i></span></div>
<div class="c" style="left:477px;top:500px;width:46px;height:25px;line-height:25px;">1.02</div>
<div class="c" style="left:524px;top:500px;width:101px;height:25px;line-height:25px;"><i class="k">一</i>/<i class="k">球半</i></div>
<div class="c" style="left:626px;top:500px;width:48px;height:25px;line-height:25px;">0.87</div>
<div class="c" style="left:675px;top:500px;width:59px;height:25px;line-height:25px;">1.44</div>
<div class="c" style="left:735px;top:500px;width:74px;height:25px;line-height:25px;">4.38</div>
<div class="c" style="left:810px;top:500px;width:76px;height:25px;line-height:25px;">7.21</div>
<div class="c" style="left:887px;top:500px;width:40px;height:25px;line-height:25px;color:#1515c0"><i class="k">负</i></div>
<div class="c" style="left:928px;top:500px;width:40px;height:25px;line-height:25px;color:#1515c0"><i class="k">输</i></div>
<div class="c" style="left:969px;top:500px;width:61px;height:25px;line-height:25px;color:#cc1111"><i class="k">大</i></div>
<div class="c" style="left:4px;top:526px;width:80px;height:25px;line-height:25px;color:#fff"><i class="k">国际友谊</i></div>
<div class="c" style="left:85px;top:526px;width:80px;height:25px;line-height:25px;">25-06-11</div>
<div class="c" style="left:166px;top:526px;width:92px;height:25px;line-height:25px;"><span style="color:#0c780c"><i class="k">阿塞拜疆</i></span></div>
<div class="c" style="left:259px;top:526px;width:95px;height:25px;line-height:25px;"><span style="color:#cc1111">1-2</span>(1-2)</div>
<div class="c" style="left:355px;top:526px;width:41px;height:25px;line-height:25px;">6-6</div>
<div class="c" style="left:397px;top:526px;width:79px;height:25px;line-height:25px;"><i class="k">匈牙利</i></div>
<div class="c" style="left:477px;top:526px;width:46px;height:25px;line-height:25px;">0.92</div>
<div class="c" style="left:524px;top:526px;width:101px;height:25px;line-height:25px;"><i class="k">受一球</i></div>
<div class="c" style="left:626px;top:526px;width:48px;height:25px;line-height:25px;">0.90</div>
<div class="c" style="left:675px;top:526px;width:59px;height:25px;line-height:25px;">5.38</div>
<div class="c" style="left:735px;top:526px;width:74px;height:25px;line-height:25px;">3.70</div>
<div class="c" style="left:810px;top:526px;width:76px;height:25px;line-height:25px;">1.61</div>
<div class="c" style="left:887px;top:526px;width:40px;height:25px;line-height:25px;color:#1515c0"><i class="k">负</i></div>
<div class="c" style="left:928px;top:526px;width:40px;height:25px;line-height:25px;color:#0c780c"><i class="k">走</i></div>
<div class="c" style="left:969px;top:526px;width:61px;height:25px;line-height:25px;color:#cc1111"><i class="k">大</i></div>
<div class="c" style="left:4px;top:552px;width:80px;height:25px;line-height:25px;color:#fff"><i class="k">国际友谊</i></div>
<div class="c" style="left:85px;top:552px;width:80px;height:25px;line-height:25px;">25-06-07</div>
<div class="c" style="left:166px;top:552px;width:92px;height:25px;line-height:25px;"><i class="k">拉脱维亚</i></div>
<div class="c" style="left:259px;top:552px;width:95px;height:25px;line-height:25px;"><span style="color:#cc1111">0-0</span>(0-0)</div>
<div class="c" style="left:355px;top:552px;width:41px;height:25px;line-height:25px;">5-1</div>
<div class="c" style="left:397px;top:552px;width:79px;height:25px;line-height:25px;"><span style="color:#0c780c"><i class="k">阿塞拜疆</i></span></div>
<div class="c" style="left:477px;top:552px;width:46px;height:25px;line-height:25px;">0.96</div>
<div class="c" style="left:524px;top:552px;width:101px;height:25px;line-height:25px;"><i class="k">平</i>/<i class="k">半</i></div>
<div class="c" style="left:626px;top:552px;width:48px;height:25px;line-height:25px;">0.90</div>
<div class="c" style="left:675px;top:552px;width:59px;height:25px;line-height:25px;">2.44</div>
<div class="c" style="left:735px;top:552px;width:74px;height:25px;line-height:25px;">3.08</div>
<div class="c" style="left:810px;top:552px;width:76px;height:25px;line-height:25px;">2.94</div>
<div class="c" style="left:887px;top:552px;width:40px;height:25px;line-height:25px;color:#0c780c"><i class="k">平</i></div>
<div class="c" style="left:928px;top:552px;width:40px;height:25px;line-height:25px;color:#cc1111"><i class="k">赢</i></div>
<div class="c" style="left:969px;top:552px;width:61px;height:25px;line-height:25px;color:#1515c0"><i class="k">小</i></div>
<div class="c" style="left:4px;top:578px;width:80px;height:25px;line-height:25px;color:#fff"><i class="k">国际友谊</i></div>
<div class="c" style="left:85px;top:578px;width:80px;height:25px;line-height:25px;">25-03-26</div>
<div class="c" style="left:166px;top:578px;width:92px;height:25px;line-height:25px;"><span style="color:#0c780c"><i class="k">阿塞拜疆</i></span></div>
<div class="c" style="left:259px;top:578px;width:95px;height:25px;line-height:25px;"><span style="color:#cc1111">0-2</span>(0-0)</div>
<div class="c" style="left:355px;top:578px;width:41px;height:25px;line-height:25px;">7-11</div>
<div class="c" style="left:397px;top:578px;width:79px;height:25px;line-height:25px;"><i class="k">白俄罗斯</i></div>
<div class="c" style="left:477px;top:578px;width:46px;height:25px;line-height:25px;">0.76</div>
<div class="c" style="left:524px;top:578px;width:101px;height:25px;line-height:25px;"><i class="k">平手</i></div>
<div class="c" style="left:626px;top:578px;width:48px;height:25px;line-height:25px;">1.06</div>
<div class="c" style="left:675px;top:578px;width:59px;height:25px;line-height:25px;">2.55</div>
<div class="c" style="left:735px;top:578px;width:74px;height:25px;line-height:25px;">3.07</div>
<div class="c" style="left:810px;top:578px;width:76px;height:25px;line-height:25px;">2.79</div>
<div class="c" style="left:887px;top:578px;width:40px;height:25px;line-height:25px;color:#1515c0"><i class="k">负</i></div>
<div class="c" style="left:928px;top:578px;width:40px;height:25px;line-height:25px;color:#1515c0"><i class="k">输</i></div>
<div class="c" style="left:969px;top:578px;width:61px;height:25px;line-height:25px;color:#1515c0"><i class="k">小</i></div>
<div class="c" style="left:4px;top:604px;width:80px;height:25px;line-height:25px;color:#fff"><i class="k">国际友谊</i></div>
<div class="c" style="left:85px;top:604px;width:80px;height:25px;line-height:25px;">25-03-23</div>
<div class="c" style="left:166px;top:604px;width:92px;height:25px;line-height:25px;"><span style="position:relative;left:-1px"><span class="bd">1</span><span style="color:#0c780c"><i class="k">阿塞拜疆</i></span></span></div>
<div class="c" style="left:259px;top:604px;width:95px;height:25px;line-height:25px;"><span style="color:#cc1111">0-3</span>(0-1)</div>
<div class="c" style="left:355px;top:604px;width:41px;height:25px;line-height:25px;">7-7</div>
<div class="c" style="left:397px;top:604px;width:79px;height:25px;line-height:25px;"><i class="k">海地</i></div>
<div class="c" style="left:477px;top:604px;width:46px;height:25px;line-height:25px;">0.90</div>
<div class="c" style="left:524px;top:604px;width:101px;height:25px;line-height:25px;"><i class="k">平</i>/<i class="k">半</i></div>
<div class="c" style="left:626px;top:604px;width:48px;height:25px;line-height:25px;">0.92</div>
<div class="c" style="left:675px;top:604px;width:59px;height:25px;line-height:25px;">2.06</div>
<div class="c" style="left:735px;top:604px;width:74px;height:25px;line-height:25px;">3.50</div>
<div class="c" style="left:810px;top:604px;width:76px;height:25px;line-height:25px;">3.24</div>
<div class="c" style="left:887px;top:604px;width:40px;height:25px;line-height:25px;color:#1515c0"><i class="k">负</i></div>
<div class="c" style="left:928px;top:604px;width:40px;height:25px;line-height:25px;color:#1515c0"><i class="k">输</i></div>
<div class="c" style="left:969px;top:604px;width:61px;height:25px;line-height:25px;color:#cc1111"><i class="k">大</i></div>
<div class="c" style="left:4px;top:630px;width:80px;height:25px;line-height:25px;color:#fff"><i class="k">欧国联</i></div>
<div class="c" style="left:85px;top:630px;width:80px;height:25px;line-height:25px;">24-11-20</div>
<div class="c" style="left:166px;top:630px;width:92px;height:25px;line-height:25px;"><i class="k">瑞典</i></div>
<div class="c" style="left:259px;top:630px;width:95px;height:25px;line-height:25px;"><span style="color:#cc1111">6-0</span>(3-0)</div>
<div class="c" style="left:355px;top:630px;width:41px;height:25px;line-height:25px;">12-1</div>
<div class="c" style="left:397px;top:630px;width:79px;height:25px;line-height:25px;"><span style="color:#0c780c"><i class="k">阿塞拜疆</i></span></div>
<div class="c" style="left:477px;top:630px;width:46px;height:25px;line-height:25px;">1.05</div>
<div class="c" style="left:524px;top:630px;width:101px;height:25px;line-height:25px;"><i class="k">两球半</i></div>
<div class="c" style="left:626px;top:630px;width:48px;height:25px;line-height:25px;">0.84</div>
<div class="c" style="left:675px;top:630px;width:59px;height:25px;line-height:25px;">1.11</div>
<div class="c" style="left:735px;top:630px;width:74px;height:25px;line-height:25px;">9.22</div>
<div class="c" style="left:810px;top:630px;width:76px;height:25px;line-height:25px;">19.95</div>
<div class="c" style="left:887px;top:630px;width:40px;height:25px;line-height:25px;color:#1515c0"><i class="k">负</i></div>
<div class="c" style="left:928px;top:630px;width:40px;height:25px;line-height:25px;color:#1515c0"><i class="k">输</i></div>
<div class="c" style="left:969px;top:630px;width:61px;height:25px;line-height:25px;color:#cc1111"><i class="k">大</i></div>
<div class="c" style="left:4px;top:656px;width:80px;height:25px;line-height:25px;color:#fff"><i class="k">欧国联</i></div>
<div class="c" style="left:85px;top:656px;width:80px;height:25px;line-height:25px;">24-11-16</div>
<div class="c" style="left:166px;top:656px;width:92px;height:25px;line-height:25px;"><span style="color:#0c780c"><i class="k">阿塞拜疆</i></span></div>
<div class="c" style="left:259px;top:656px;width:95px;height:25px;line-height:25px;"><span style="color:#cc1111">0-0</span>(0-0)</div>
<div class="c" style="left:355px;top:656px;width:41px;height:25px;line-height:25px;">8-3</div>
<div class="c" style="left:397px;top:656px;width:79px;height:25px;line-height:25px;"><i class="k">爱沙尼亚</i></div>
<div class="c" style="left:477px;top:656px;width:46px;height:25px;line-height:25px;">0.99</div>
<div class="c" style="left:524px;top:656px;width:101px;height:25px;line-height:25px;"><i class="k">半</i>/<i class="k">一</i></div>
<div class="c" style="left:626px;top:656px;width:48px;height:25px;line-height:25px;">0.90</div>
<div class="c" style="left:675px;top:656px;width:59px;height:25px;line-height:25px;">1.68</div>
<div class="c" style="left:735px;top:656px;width:74px;height:25px;line-height:25px;">3.52</div>
<div class="c" style="left:810px;top:656px;width:76px;height:25px;line-height:25px;">5.38</div>
<div class="c" style="left:887px;top:656px;width:40px;height:25px;line-height:25px;color:#0c780c"><i class="k">平</i></div>
<div class="c" style="left:928px;top:656px;width:40px;height:25px;line-height:25px;color:#1515c0"><i class="k">输</i></div>
<div class="c" style="left:969px;top:656px;width:61px;height:25px;line-height:25px;color:#1515c0"><i class="k">小</i></div>
<div class="c" style="left:4px;top:682px;width:80px;height:25px;line-height:25px;color:#fff"><i class="k">欧国联</i></div>
<div class="c" style="left:85px;top:682px;width:80px;height:25px;line-height:25px;">24-10-15</div>
<div class="c" style="left:166px;top:682px;width:92px;height:25px;line-height:25px;"><span style="position:relative;left:-1px"><span class="bd">1</span><span style="color:#0c780c"><i class="k">阿塞拜疆</i></span></span></div>
<div class="c" style="left:259px;top:682px;width:95px;height:25px;line-height:25px;"><span style="color:#cc1111">1-3</span>(1-1)</div>
<div class="c" style="left:355px;top:682px;width:41px;height:25px;line-height:25px;">5-6</div>
<div class="c" style="left:397px;top:682px;width:79px;height:25px;line-height:25px;"><i class="k">斯洛伐克</i></div>
<div class="c" style="left:477px;top:682px;width:46px;height:25px;line-height:25px;">1.13</div>
<div class="c" style="left:524px;top:682px;width:101px;height:25px;line-height:25px;"><i class="k">受半</i>/<i class="k">一</i></div>
<div class="c" style="left:626px;top:682px;width:48px;height:25px;line-height:25px;">0.77</div>
<div class="c" style="left:675px;top:682px;width:59px;height:25px;line-height:25px;">5.26</div>
<div class="c" style="left:735px;top:682px;width:74px;height:25px;line-height:25px;">3.81</div>
<div class="c" style="left:810px;top:682px;width:76px;height:25px;line-height:25px;">1.64</div>
<div class="c" style="left:887px;top:682px;width:40px;height:25px;line-height:25px;color:#1515c0"><i class="k">负</i></div>
<div class="c" style="left:928px;top:682px;width:40px;height:25px;line-height:25px;color:#1515c0"><i class="k">输</i></div>
<div class="c" style="left:969px;top:682px;width:61px;height:25px;line-height:25px;color:#cc1111"><i class="k">大</i></div>
<div class="c" style="left:4px;top:707px;width:1026px;height:25px;line-height:25px;letter-spacing:0.2px"><i class="k">近</i><span style="color:#cc1111">10</span><i class="k">场</i>,<i class="k">胜</i>0<i class="k">平</i>3<i class="k">负</i>7, <i class="k">胜率</i>:<span style="color:#cc1111">0%</span> <i class="k">让胜率</i>:<span style="color:#cc1111">30%</span> <i class="k">大率</i>:<span style="color:#cc1111">50%</span> <i class="k">单率</i>:<span style="color:#cc1111">40%</span></div>
</body></html>
